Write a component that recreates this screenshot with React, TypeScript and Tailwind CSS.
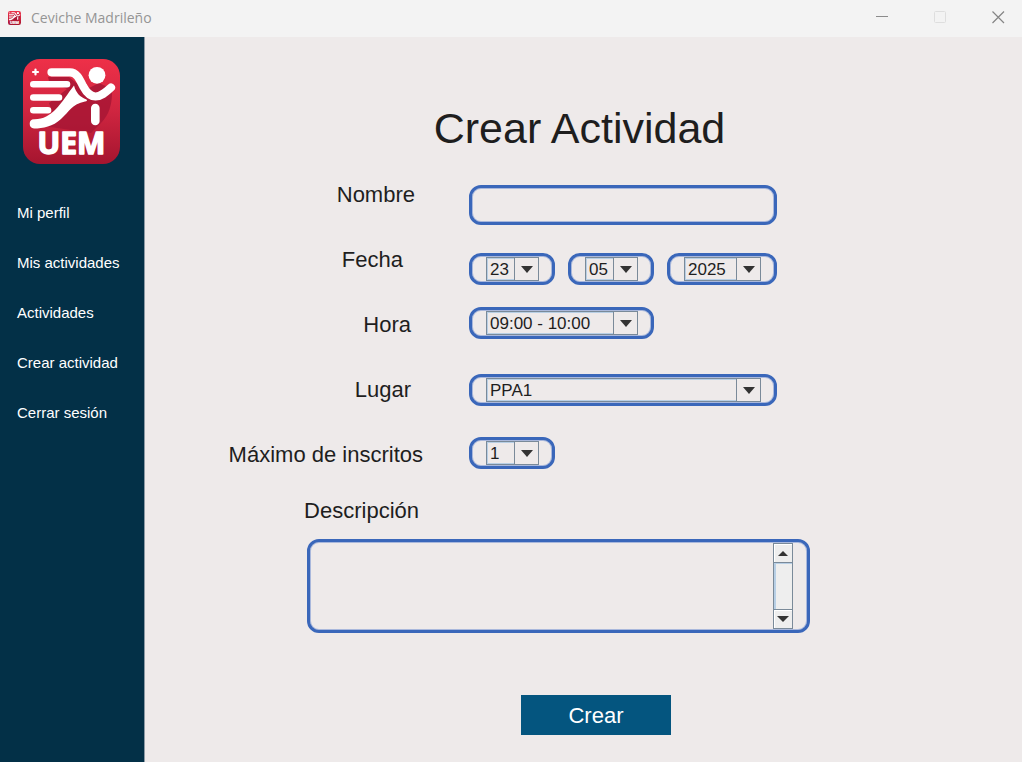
import React from "react";

const NAV_ITEMS = ["Mi perfil", "Mis actividades", "Actividades", "Crear actividad", "Cerrar sesión"];

const FRAME =
  "rounded-xl border-[3px] border-[#3a67ba] shadow-[inset_0_0_0_1px_#a9b8dc]";

function Logo({ className }: { className: string }) {
  return (
    <svg viewBox="0 0 97 105" preserveAspectRatio="none" className={className} aria-hidden="true">
      <defs>
        <linearGradient id="logoRed" x1="0" y1="0" x2="0" y2="1">
          <stop offset="0" stopColor="#ee3048" />
          <stop offset="0.5" stopColor="#cf2540" />
          <stop offset="1" stopColor="#a5152f" />
        </linearGradient>
      </defs>
      <rect width="97" height="105" rx="17" fill="url(#logoRed)" />
      <path
        d="M25 18 H46 L62 31 L76 24 L89 30 Q90 52 78 64 L68 74 L14 66 L30 55 L26 44 L44 30 L26 22 Z"
        fill="#a81635"
        opacity="0.85"
      />
      <path d="M12.500 10.500V15.500M10 13H15" stroke="#fff" strokeWidth="2.200" strokeLinecap="round" />
      <g stroke="#fff" fill="none" strokeLinecap="round" strokeLinejoin="round">
        <path d="M28.500 13.300H47C53.500 13.300 56.500 20 60 27C64 34.500 68 37.500 72.500 37.500C78 37.500 82 34 88 28.500" strokeWidth="8.200" />
        <path d="M10.300 25.300H44M10.300 38.500H36M10.300 51.300H25" strokeWidth="6.600" />
        <path d="M72.300 49V62" strokeWidth="8.600" />
      </g>
      <path
        d="M51 26.500C53 34 57 38 63.500 40.500Q65 42 62 42.500C49 45 46 53 38 60C30 67.500 20 69.500 11 69.500Q6.700 69 6.700 64.700Q6.700 60.500 11 60.300C20 60.500 27 56 32 51C40 43 45 34 51 26.500Z"
        fill="#fff"
      />
      <circle cx="74" cy="16.300" r="8.400" fill="#fff" />
      <text
        x="48.500"
        y="94.500"
        textAnchor="middle"
        fontFamily="'Open Sans', sans-serif"
        fontWeight="700"
        fontSize="30"
        fill="#fff"
        stroke="#fff"
        strokeWidth="1.500"
        strokeLinejoin="round"
      >
        UEM
      </text>
    </svg>
  );
}

function SelectBox({ id, label, options, width }: { id: string; label?: string; options: string[]; width: string }) {
  return (
    <div className={`${FRAME} ${width} h-8 py-px pl-[14px] pr-[13px]`}>
      <div className="relative h-6">
        <select
          id={id}
          aria-label={label}
          className="block h-6 w-full appearance-none border border-[#7a8a99] bg-[#eeeaea] pl-[3px] pr-6 pt-0.5 text-[17px] leading-5 text-[#1e1e1e] shadow-[inset_0_0_0_1px_#b8cfe5] outline-none"
        >
          {options.map((o) => (
            <option key={o}>{o}</option>
          ))}
        </select>
        <span className="pointer-events-none absolute inset-y-0 right-0 flex w-[25px] items-center justify-center border border-[#7a8a99] bg-[#eeeaea]">
          <svg viewBox="0 0 12 7" className="h-[7px] w-3" aria-hidden="true">
            <path d="M0 0H12L6 7Z" fill="#333" />
          </svg>
        </span>
      </div>
    </div>
  );
}

function FieldLabel({ htmlFor, pad, children }: { htmlFor: string; pad: string; children: React.ReactNode }) {
  return (
    <label htmlFor={htmlFor} className={`${pad} whitespace-nowrap text-right text-[22px] leading-[25px]`}>
      {children}
    </label>
  );
}

function TitleBar() {
  return (
    <header className="flex h-[37px] items-center justify-between bg-[#f3f3f3] pb-0.5 pl-2">
      <div className="flex items-center gap-[10px]">
        <Logo className="h-[14px] w-[13px]" />
        <span className="font-['Open_Sans',sans-serif] text-[14px] leading-5 text-[#959595]">Ceviche Madrileño</span>
      </div>
      <div className="flex gap-[10px]">
        <button aria-label="Minimizar" className="flex h-9 w-12 items-center justify-center">
          <svg viewBox="0 0 13 13" className="size-[13px]" stroke="#8b8b8b">
            <path d="M0 5.500H12" />
          </svg>
        </button>
        <button aria-label="Maximizar" disabled className="flex h-9 w-12 items-center justify-center">
          <svg viewBox="0 0 13 13" className="size-[13px]" fill="none" stroke="#dedede">
            <rect x="0.500" y="0.500" width="11" height="11" rx="1" />
          </svg>
        </button>
        <button aria-label="Cerrar" className="flex h-9 w-12 items-center justify-center">
          <svg viewBox="0 0 13 13" className="size-[13px]" stroke="#858585" strokeWidth="1.200">
            <path d="M0.500 0.500L12 12M12 0.500L0.500 12" />
          </svg>
        </button>
      </div>
    </header>
  );
}

export default function App() {
  return (
    <div className="flex min-h-screen flex-col bg-[#eeeaea] font-['Liberation_Sans',Arial,sans-serif] text-[#1e1e1e]">
      <TitleBar />
      <div className="flex grow">
        <aside className="w-[145px] shrink-0 border-r border-[#8d9aa5] bg-[#033047] pt-[22px]">
          <Logo className="ml-[23px] h-[105px] w-[97px]" />
          <nav className="mt-6 flex flex-col">
            {NAV_ITEMS.map((item) => (
              <a key={item} href="#" className="pl-[17px] text-[15px] leading-[50px] text-white">
                {item}
              </a>
            ))}
          </nav>
        </aside>

        <main className="grow pr-2 pt-16">
          <form className="mx-auto flex max-w-[713px] flex-col" onSubmit={(e) => e.preventDefault()}>
            <h1 className="text-center text-[43px] leading-[54px]">Crear Actividad</h1>

            <div className="mt-[27px] grid grid-cols-[200px_308px] gap-x-[46px]">
              <div className="flex flex-col gap-10">
                <FieldLabel htmlFor="nombre" pad="pr-2">Nombre</FieldLabel>
                <FieldLabel htmlFor="dia" pad="pr-5">Fecha</FieldLabel>
                <FieldLabel htmlFor="hora" pad="pr-3">Hora</FieldLabel>
                <FieldLabel htmlFor="lugar" pad="pr-3">Lugar</FieldLabel>
                <FieldLabel htmlFor="maximo" pad="pr-0">Máximo de inscritos</FieldLabel>
              </div>
              <div className="flex flex-col pt-[3px]">
                <input
                  id="nombre"
                  type="text"
                  className={`${FRAME} h-10 w-full bg-transparent px-3 text-[17px] outline-none`}
                />
                <div className="mt-7 flex gap-[13px]">
                  <SelectBox id="dia" label="Día" options={["23"]} width="w-[86px]" />
                  <SelectBox id="mes" label="Mes" options={["05"]} width="w-[86px]" />
                  <SelectBox id="anio" label="Año" options={["2025"]} width="w-[110px]" />
                </div>
                <div className="mt-[22px]">
                  <SelectBox id="hora" options={["09:00 - 10:00"]} width="w-[185px]" />
                </div>
                <div className="mt-[35px]">
                  <SelectBox id="lugar" options={["PPA1"]} width="w-full" />
                </div>
                <div className="mt-[31px]">
                  <SelectBox id="maximo" options={["1"]} width="w-[86px]" />
                </div>
              </div>
            </div>

            <div className="mt-[29px] flex w-[200px] flex-col">
              <FieldLabel htmlFor="descripcion" pad="pr-1">Descripción</FieldLabel>
            </div>

            <div className={`${FRAME} ml-[84px] mt-4 flex h-[94px] w-[503px] py-px pr-[14px]`}>
              <textarea
                id="descripcion"
                className="grow resize-none overflow-hidden bg-transparent px-3 py-1 text-[17px] outline-none"
              />
              <div className="flex w-5 flex-col border-x border-[#7a8a99] bg-[#eeeeee]">
                <button type="button" aria-label="Subir" className="flex h-5 items-center justify-center border-y border-[#7a8a99] shadow-[inset_1px_1px_0_#fff]">
                  <svg viewBox="0 0 10 5" className="h-[5px] w-[10px]">
                    <path d="M0 5H10L5 0Z" fill="#333" />
                  </svg>
                </button>
                <div className="grow shadow-[inset_2px_1px_0_#b8cfe5]" />
                <button type="button" aria-label="Bajar" className="flex h-5 items-center justify-center border-y border-[#7a8a99] shadow-[inset_1px_1px_0_#fff]">
                  <svg viewBox="0 0 12 6" className="h-[6px] w-3">
                    <path d="M0 0H12L6 6Z" fill="#333" />
                  </svg>
                </button>
              </div>
            </div>

            <button
              type="submit"
              className="ml-[298px] mt-[62px] h-10 w-[150px] bg-[#04557f] text-[22px] leading-[42px] text-white"
            >
              Crear
            </button>
          </form>
        </main>
      </div>
    </div>
  );
}
